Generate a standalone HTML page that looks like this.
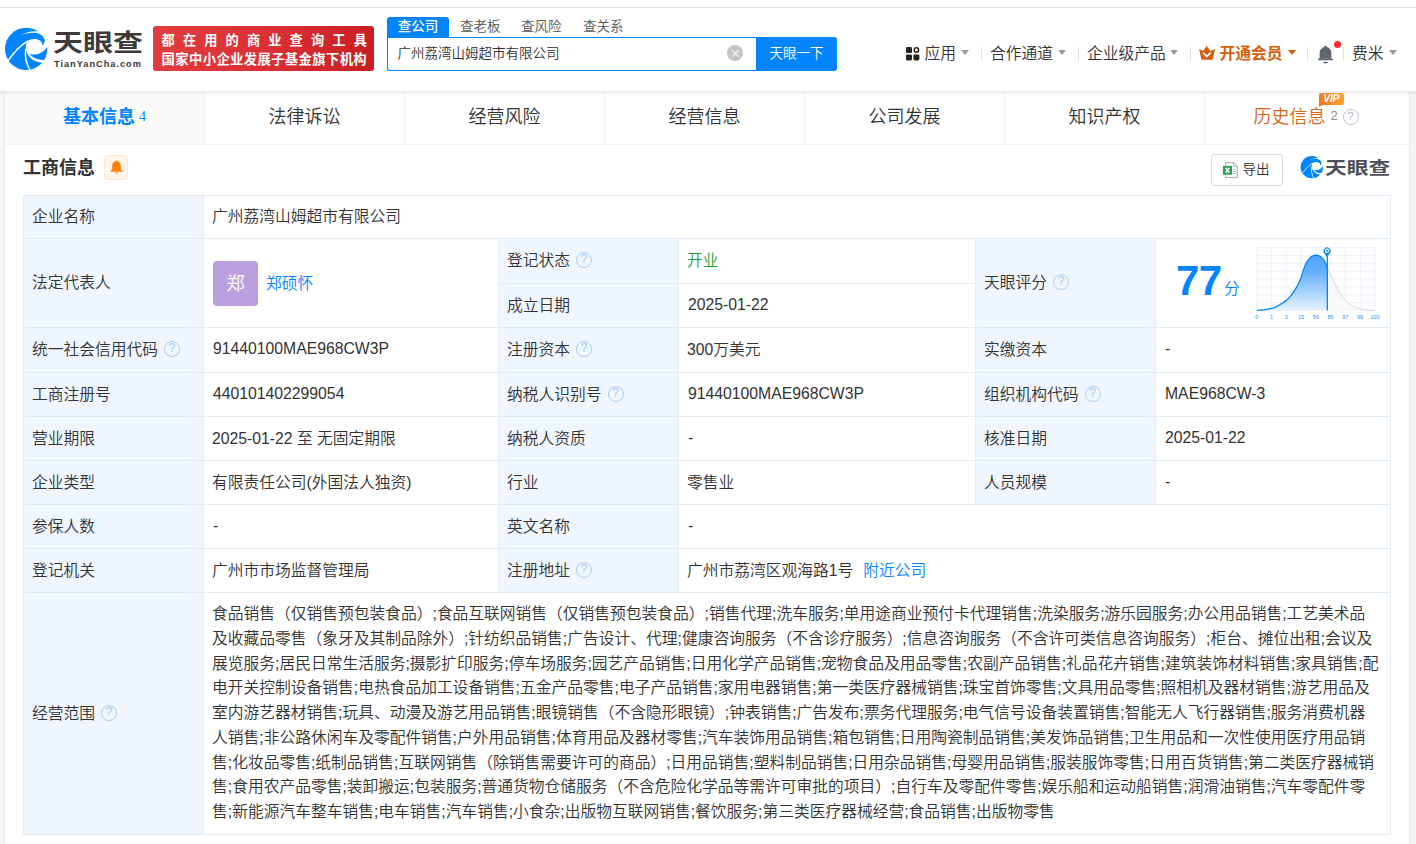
<!DOCTYPE html>
<html lang="zh-CN">
<head>
<meta charset="utf-8">
<title>广州荔湾山姆超市有限公司 - 天眼查</title>
<style>
*{box-sizing:border-box;margin:0;padding:0}
html,body{width:1416px;height:844px;overflow:hidden;background:#fff}
body{font-family:"Liberation Sans","Noto Sans CJK SC",sans-serif;color:#333;font-size:15.75px;font-weight:350;position:relative}
.abs{position:absolute}
.topline{left:0;top:7px;width:1416px;height:1px;background:#e4e4e4}
.header{left:0;top:8px;width:1416px;height:83px;background:#fff}
.pagebg{left:0;top:91px;width:1416px;height:753px;background:#f5f5f5;border-left:0}
.edge{top:91px;width:1px;height:753px;background:#ebebeb}
.hshadow{left:0;top:91px;width:1416px;height:5px;background:linear-gradient(rgba(0,0,0,0.065),rgba(0,0,0,0));z-index:5}
.main{left:5px;top:91px;width:1404px;height:753px;background:#fff}
/* logo */
.logo svg{display:block}
.brand{left:52.5px;top:24.5px;font-size:24px;font-weight:bold;color:#3e3a39;letter-spacing:0;line-height:36px;white-space:nowrap;transform:scaleX(1.25);transform-origin:0 0}
.brand2{left:54px;top:57.5px;font-size:9.2px;font-weight:bold;color:#3e3a39;letter-spacing:1.0px;line-height:12px;white-space:nowrap}
.banner{left:153px;top:26px;width:221px;height:45px;border-radius:3px;background:linear-gradient(100deg,#e33d3f 0%,#db3034 50%,#c81e22 100%);color:#fff;font-weight:bold;white-space:nowrap}
.banner .l1{position:absolute;left:8.6px;top:6px;font-size:13.2px;letter-spacing:8.15px;line-height:18px}
.banner .l2{position:absolute;left:8.6px;top:24.6px;font-size:13.3px;letter-spacing:0.4px;line-height:18px}
/* search */
.stab{top:17px;height:20px;line-height:20px;font-size:13.5px;color:#555;white-space:nowrap}
.stab.on{left:387px;width:62px;background:#0084ff;color:#fff;font-weight:500;text-align:center;border-radius:3px 3px 0 0}
.sinput{left:387px;top:37px;width:370px;height:34px;border:1px solid #0084ff;border-right:0;border-radius:0 0 0 3px;background:#fff;font-size:13.5px;line-height:32px;padding-left:9.5px;color:#333;white-space:nowrap}
.sclear{left:727px;top:45px;width:16px;height:16px;border-radius:50%;background:#c4c4c4}
.sclear:before,.sclear:after{content:"";position:absolute;left:7.5px;top:3.5px;width:1px;height:9px;background:#fff;transform:rotate(45deg)}
.sclear:after{transform:rotate(-45deg)}
.sbtn{left:756px;top:37px;width:81px;height:34px;background:#0084ff;color:#fff;font-size:13.5px;line-height:34px;text-align:center;border-radius:0 3px 3px 0}
/* nav */
.nav{top:43px;height:22px;line-height:22px;font-size:15.75px;color:#333;white-space:nowrap}
.caret{width:0;height:0;border-left:4.5px solid transparent;border-right:4.5px solid transparent;border-top:5.4px solid #999;top:50px;margin-left:-0.5px}
.sep{top:47px;width:1px;height:14px;background:#dfe3ea}
/* tabs */
.tabs{left:5px;top:91px;width:1404px;height:54px;border-bottom:1px solid #f3f3f3;background:#fff}
.tab{position:absolute;top:0;height:53px;width:200px;border-right:1px solid #f1f1f1;text-align:center;font-size:18px;line-height:52px;color:#333;white-space:nowrap}
.tab.on{background:#fafafa;color:#0084ff;font-weight:bold}
.tab .n{font-family:"Liberation Serif",serif;font-weight:normal;font-size:14px;margin-left:4px;position:relative;top:-2px}
/* section */
.stitle{left:23px;top:155px;font-size:18px;font-weight:bold;line-height:26px;color:#333;white-space:nowrap}
.bellbox{left:104px;top:155px;width:24px;height:25px;border:1px solid #ffe6d0;background:#fff4ea;border-radius:3px}
.export{left:1211px;top:154px;width:72px;height:32px;border:1px solid #dcdcdc;border-radius:3px;background:#fff;font-size:13.5px;line-height:30px;color:#333}
.export span{position:absolute;left:30.5px;top:0}
.mbrand{left:1325px;top:154.5px;font-size:17.4px;font-weight:bold;color:#4b4f55;line-height:26px;letter-spacing:0;white-space:nowrap;transform:scaleX(1.25);transform-origin:0 0}
/* table */
table{position:absolute;left:23px;top:195px;width:1367px;border-collapse:collapse;table-layout:fixed;font-size:15.75px;color:#333;font-weight:350}
td{border:1px solid #e2ecf7;height:44px;padding:0 0 0 8px;line-height:24px;vertical-align:middle;white-space:nowrap;background:#fff}
td.k{background:#eff6fd}
.q{display:inline-block;width:16px;height:16px;border:1.4px solid #a6cdf4;border-radius:50%;color:#a3cbf4;font-style:normal;font-size:12.5px;line-height:13.5px;text-align:center;vertical-align:middle;position:relative;top:-1.5px;margin-left:6px;font-weight:400;font-family:"Liberation Sans",sans-serif}
a{color:#0084ff;text-decoration:none}
.ava{display:inline-block;width:45px;height:45px;border-radius:4px;background:#bb9fde;color:#fff;font-size:18.5px;line-height:45px;text-align:center;vertical-align:middle;margin-right:9px;padding:0;font-weight:350}
td.en{padding-left:9px}td.en span{position:relative;top:-1px}
tr.h43 td{height:43px}tr.h45 td{height:45px}
.scope{padding:0 0 0 8px;line-height:24.75px;white-space:nowrap}
.scope .ln{display:block;height:24.75px}
.score{position:relative;height:87px}
.score .num{position:absolute;left:20px;top:17.5px;font-size:42px;font-weight:bold;color:#0084ff;line-height:48px;letter-spacing:-0.5px}
.score .fen{position:absolute;left:68px;top:38px;font-size:15.75px;color:#0084ff;line-height:22px}
.score .chart{position:absolute;left:94px;top:0}
</style>
</head>
<body>
<div class="abs topline"></div>
<div class="abs pagebg"></div>
<div class="abs header"></div>
<div class="abs edge" style="left:4px"></div><div class="abs edge" style="left:1409px"></div>
<div class="abs main"></div>

<!-- logo -->
<div class="abs logo" style="left:0;top:22px"><svg width="54" height="54" viewBox="0 0 844 844"><circle cx="409" cy="420" r="331" fill="#0084ff"/>
<path fill="#fff" d="M296 217C390 178 500 158 590 176C650 195 700 245 700 300L668 374C662 320 640 285 590 272C530 258 470 272 430 297C405 340 398 390 405 430C420 500 470 580 560 615C600 630 630 635 660 636L682 622L692 592C600 598 510 560 458 500C550 525 670 500 735 395L790 380L770 140L590 110L585 148C500 136 390 166 296 217Z"/>
<path fill="none" stroke="#fff" stroke-width="23" d="M436 296C330 360 220 470 124 610"/>
<path fill="none" stroke="#fff" stroke-width="24" d="M404 420C385 520 410 650 472 760"/></svg></div>
<div class="abs brand">天眼查</div>
<div class="abs brand2">TianYanCha.com</div>
<div class="abs banner"><span class="l1">都在用的商业查询工具</span><span class="l2">国家中小企业发展子基金旗下机构</span></div>

<!-- search -->
<div class="abs stab on">查公司</div>
<div class="abs stab" style="left:460px">查老板</div>
<div class="abs stab" style="left:521px">查风险</div>
<div class="abs stab" style="left:583px">查关系</div>
<div class="abs sinput">广州荔湾山姆超市有限公司</div>
<div class="abs sclear"></div>
<div class="abs sbtn">天眼一下</div>

<!-- nav -->
<svg class="abs" style="left:906px;top:47px" width="14" height="14" viewBox="0 0 14 14"><rect x="0" y="0" width="6" height="6" rx="1.3" fill="#222"/><rect x="0" y="7.4" width="6" height="6" rx="1.3" fill="#222"/><rect x="7.4" y="7.4" width="6" height="6" rx="1.3" fill="#222"/><circle cx="10.4" cy="3" r="2.2" fill="none" stroke="#222" stroke-width="1.5"/></svg>
<div class="abs nav" style="left:924.5px">应用</div>
<div class="abs caret" style="left:961.5px"></div>
<div class="abs sep" style="left:981px"></div>
<div class="abs nav" style="left:990px">合作通道</div>
<div class="abs caret" style="left:1058px"></div>
<div class="abs sep" style="left:1078px"></div>
<div class="abs nav" style="left:1087px">企业级产品</div>
<div class="abs caret" style="left:1170.5px"></div>
<div class="abs sep" style="left:1190px"></div>
<svg class="abs" style="left:1199px;top:46px" width="16" height="14" viewBox="0 0 16 14"><path d="M0.1 2.9L3.9 4.9L7.7 0.1L11.5 4.9L16 2.9L13.9 12.8Q13.7 13.7 12.8 13.7H3.3Q2.4 13.7 2.2 12.8Z" fill="#d45f0a"/><path d="M4.2 6.6L7.7 10.6L11.6 6.6" fill="none" stroke="#fff" stroke-width="1.7"/></svg>
<div class="abs nav" style="left:1219.5px;color:#d45f0a;font-weight:bold">开通会员</div>
<div class="abs caret" style="left:1288px;border-top-color:#d45f0a"></div>
<div class="abs sep" style="left:1307px"></div>
<svg class="abs" style="left:1317px;top:45px" width="17" height="19" viewBox="0 0 17 19"><path d="M8.5 0.8C9.3 0.8 9.7 1.3 9.7 2C12.7 2.6 14.4 5.2 14.4 8.2V13.8H2.6V8.2C2.6 5.2 4.3 2.6 7.3 2C7.3 1.3 7.7 0.8 8.5 0.8Z" fill="#5f6672"/><rect x="0.9" y="13.5" width="15.2" height="1.8" rx="0.9" fill="#5f6672"/><rect x="6.2" y="16.7" width="4.6" height="1.5" rx="0.7" fill="#5f6672"/></svg>
<div class="abs" style="left:1334px;top:41px;width:7px;height:7px;border-radius:50%;background:#ff2b2b"></div>
<div class="abs sep" style="left:1343px"></div>
<div class="abs nav" style="left:1352px">费米</div>
<div class="abs caret" style="left:1389px"></div>

<!-- tabs -->
<div class="abs tabs">
<div class="tab on" style="left:0">基本信息<span class="n">4</span></div>
<div class="tab" style="left:200px">法律诉讼</div>
<div class="tab" style="left:400px">经营风险</div>
<div class="tab" style="left:600px">经营信息</div>
<div class="tab" style="left:800px">公司发展</div>
<div class="tab" style="left:1000px">知识产权</div>
<div class="tab" style="left:1200px;width:204px;border-right:0;color:#d9641a;text-align:left;padding-left:48.5px">历史信息<span style="font-size:13px;color:#8a8a8a;margin-left:5px;position:relative;top:-3px;font-weight:400">2</span></div>
</div>
<div class="abs" style="left:1342.5px;top:109px;width:16px;height:16px;border:1.3px solid #c3c7ce;border-radius:50%;color:#b3b7be;font-size:11.5px;line-height:13.5px;text-align:center;font-family:'Liberation Sans',sans-serif">?</div>
<svg class="abs" style="left:1318px;top:92px;z-index:6" width="27" height="16" viewBox="0 0 27 16"><defs><linearGradient id="vg" x1="0" y1="0" x2="1" y2="0"><stop offset="0" stop-color="#f37a1a"/><stop offset="1" stop-color="#ffa232"/></linearGradient></defs><path d="M3 1H24Q26 1 26 3V11Q26 13 24 13H5L1 15V3Q1 1 3 1Z" fill="url(#vg)"/><text x="13.3" y="9.6" font-family="Liberation Sans, sans-serif" font-size="10.4" font-weight="bold" font-style="italic" fill="#fff" text-anchor="middle" letter-spacing="-0.3">VIP</text></svg>
<div class="abs hshadow"></div>

<!-- section title -->
<div class="abs stitle">工商信息</div>
<div class="abs bellbox"><svg style="position:absolute;left:4.5px;top:4px" width="13" height="14" viewBox="0 0 13 14"><path d="M6.5 0.4C7.2 0.4 7.6 0.8 7.6 1.3C9.8 1.9 10.8 3.7 10.8 5.8V9L12.6 11.3V11.8H0.4V11.3L2.2 9V5.8C2.2 3.7 3.2 1.9 5.4 1.3C5.4 0.8 5.8 0.4 6.5 0.4Z" fill="#ff8210"/><path d="M4.8 12.4H8.2C8 13.2 7.3 13.7 6.5 13.7C5.7 13.7 5 13.2 4.8 12.4Z" fill="#ff8210"/></svg></div>
<div class="abs export"><svg style="position:absolute;left:11px;top:7px" width="16" height="17" viewBox="0 0 16 17"><path d="M2.5 0.6H10.6L14.4 4.4V15.4H2.5Z" fill="#fff" stroke="#ababab" stroke-width="1"/><path d="M10.6 0.6V4.4H14.4" fill="none" stroke="#ababab" stroke-width="0.9"/><path d="M10 7.5H12.8M10 9.5H12.8M10 11.5H12.8" stroke="#b5b5b5" stroke-width="0.9"/><rect x="0" y="3.9" width="9" height="8.8" fill="#1ea24f"/><path d="M2.6 5.8L6.4 10.8M6.4 5.8L2.6 10.8" stroke="#fff" stroke-width="1.5"/></svg><span>导出</span></div>
<div class="abs logo" style="left:1298.2px;top:153px"><svg width="28.5" height="28.5" viewBox="0 0 844 844"><circle cx="409" cy="420" r="331" fill="#0084ff"/>
<path fill="#fff" d="M296 217C390 178 500 158 590 176C650 195 700 245 700 300L668 374C662 320 640 285 590 272C530 258 470 272 430 297C405 340 398 390 405 430C420 500 470 580 560 615C600 630 630 635 660 636L682 622L692 592C600 598 510 560 458 500C550 525 670 500 735 395L790 380L770 140L590 110L585 148C500 136 390 166 296 217Z"/>
<path fill="none" stroke="#fff" stroke-width="23" d="M436 296C330 360 220 470 124 610"/>
<path fill="none" stroke="#fff" stroke-width="24" d="M404 420C385 520 410 650 472 760"/></svg></div>
<div class="abs mbrand">天眼查</div>

<!-- table -->
<table>
<colgroup><col style="width:180px"><col style="width:295px"><col style="width:180px"><col style="width:297px"><col style="width:180px"><col style="width:235px"></colgroup>
<tr class="h43"><td class="k">企业名称</td><td colspan="5">广州荔湾山姆超市有限公司</td></tr>
<tr class="h45"><td class="k" rowspan="2">法定代表人</td><td rowspan="2" style="padding-left:9px"><span class="ava">郑</span><a style="position:relative;top:2px;left:-1px">郑硕怀</a></td><td class="k">登记状态<i class="q">?</i></td><td style="color:#1f9e40">开业</td><td class="k" rowspan="2">天眼评分<i class="q">?</i></td><td rowspan="2" style="padding:0"><div class="score"><span class="num">77</span><span class="fen">分</span><svg class="chart" width="140" height="86" viewBox="0 0 140 86">
<defs><linearGradient id="bg1" x1="0" y1="0" x2="0" y2="1"><stop offset="0" stop-color="#4da3ff"/><stop offset="0.3" stop-color="#66b0ff"/><stop offset="1" stop-color="#e6f2ff"/></linearGradient></defs>
<g stroke="#ebf1fb" stroke-width="0.9"><line x1="6.85" y1="7.55" x2="6.85" y2="70.50"/><line x1="21.61" y1="7.55" x2="21.61" y2="70.50"/><line x1="36.36" y1="7.55" x2="36.36" y2="70.50"/><line x1="51.12" y1="7.55" x2="51.12" y2="70.50"/><line x1="65.88" y1="7.55" x2="65.88" y2="70.50"/><line x1="80.63" y1="7.55" x2="80.63" y2="70.50"/><line x1="95.39" y1="7.55" x2="95.39" y2="70.50"/><line x1="110.14" y1="7.55" x2="110.14" y2="70.50"/><line x1="124.90" y1="7.55" x2="124.90" y2="70.50"/><line x1="6.85" y1="7.55" x2="124.90" y2="7.55"/><line x1="6.85" y1="15.42" x2="124.90" y2="15.42"/><line x1="6.85" y1="23.29" x2="124.90" y2="23.29"/><line x1="6.85" y1="31.16" x2="124.90" y2="31.16"/><line x1="6.85" y1="39.02" x2="124.90" y2="39.02"/><line x1="6.85" y1="46.89" x2="124.90" y2="46.89"/><line x1="6.85" y1="54.76" x2="124.90" y2="54.76"/><line x1="6.85" y1="62.63" x2="124.90" y2="62.63"/><line x1="6.85" y1="70.50" x2="124.90" y2="70.50"/></g>
<polygon points="77.3,27.7 77.7,28.4 78.1,29.4 78.6,30.6 79.2,31.9 79.9,33.3 80.6,34.7 81.3,36.3 82.1,38.1 83.0,39.9 83.9,41.8 84.7,43.6 85.6,45.3 86.4,47.0 87.3,48.6 88.1,50.1 89.0,51.6 89.8,53.1 90.6,54.4 91.4,55.6 92.2,56.6 92.9,57.6 93.7,58.6 94.5,59.5 95.5,60.4 96.5,61.4 97.7,62.4 98.9,63.4 100.2,64.3 101.5,65.2 102.7,66.0 104.0,66.6 105.2,67.2 106.5,67.8 107.8,68.2 109.0,68.6 110.3,69.0 111.5,69.3 112.8,69.5 114.1,69.7 115.4,69.9 116.6,70.0 117.8,70.1 119.1,70.2 120.5,70.3 121.8,70.4 123.1,70.4 124.1,70.5 124.9,70.5 124.9,70.5 77.3,70.5" fill="#f9f9fa"/>
<polyline points="77.3,27.7 77.7,28.4 78.1,29.4 78.6,30.6 79.2,31.9 79.9,33.3 80.6,34.7 81.3,36.3 82.1,38.1 83.0,39.9 83.9,41.8 84.7,43.6 85.6,45.3 86.4,47.0 87.3,48.6 88.1,50.1 89.0,51.6 89.8,53.1 90.6,54.4 91.4,55.6 92.2,56.6 92.9,57.6 93.7,58.6 94.5,59.5 95.5,60.4 96.5,61.4 97.7,62.4 98.9,63.4 100.2,64.3 101.5,65.2 102.7,66.0 104.0,66.6 105.2,67.2 106.5,67.8 107.8,68.2 109.0,68.6 110.3,69.0 111.5,69.3 112.8,69.5 114.1,69.7 115.4,69.9 116.6,70.0 117.8,70.1 119.1,70.2 120.5,70.3 121.8,70.4 123.1,70.4 124.1,70.5 124.9,70.5" fill="none" stroke="#cfd3da" stroke-width="0.9"/>
<polygon points="6.8,70.4 7.6,70.3 8.7,70.2 10.0,70.1 11.4,70.0 12.8,69.8 14.1,69.7 15.3,69.5 16.6,69.4 17.9,69.2 19.2,69.0 20.4,68.7 21.5,68.5 22.4,68.2 23.3,67.9 24.0,67.6 24.8,67.3 25.5,67.0 26.2,66.7 26.9,66.3 27.5,66.0 28.1,65.7 28.7,65.3 29.4,64.9 30.2,64.5 31.1,63.9 32.2,63.2 33.2,62.6 34.3,61.8 35.3,61.1 36.3,60.4 37.1,59.8 37.8,59.1 38.5,58.4 39.1,57.7 39.7,57.1 40.3,56.4 40.8,55.8 41.3,55.2 41.8,54.5 42.3,53.9 42.8,53.2 43.3,52.4 43.9,51.4 44.6,50.5 45.3,49.4 46.0,48.2 46.7,47.1 47.3,45.8 48.0,44.5 48.6,43.2 49.3,41.8 49.9,40.3 50.6,38.8 51.2,37.3 51.7,35.6 52.3,33.9 52.8,32.1 53.3,30.3 53.9,28.7 54.4,27.2 54.9,25.9 55.4,24.8 55.8,23.8 56.3,22.9 56.8,22.0 57.4,21.2 58.0,20.3 58.7,19.4 59.3,18.6 60.0,17.8 60.7,17.2 61.4,16.6 62.2,16.2 62.9,15.8 63.7,15.5 64.4,15.3 65.2,15.1 66.0,15.1 66.7,15.1 67.5,15.3 68.3,15.5 69.0,15.8 69.8,16.2 70.5,16.6 71.2,17.2 71.9,17.8 72.6,18.6 73.3,19.4 73.9,20.2 74.5,21.2 75.1,22.2 75.7,23.4 76.2,24.7 76.7,25.9 77.1,27.0 77.3,27.7 77.3,70.5 6.8,70.5" fill="url(#bg1)"/>
<polyline points="6.8,70.4 7.6,70.3 8.7,70.2 10.0,70.1 11.4,70.0 12.8,69.8 14.1,69.7 15.3,69.5 16.6,69.4 17.9,69.2 19.2,69.0 20.4,68.7 21.5,68.5 22.4,68.2 23.3,67.9 24.0,67.6 24.8,67.3 25.5,67.0 26.2,66.7 26.9,66.3 27.5,66.0 28.1,65.7 28.7,65.3 29.4,64.9 30.2,64.5 31.1,63.9 32.2,63.2 33.2,62.6 34.3,61.8 35.3,61.1 36.3,60.4 37.1,59.8 37.8,59.1 38.5,58.4 39.1,57.7 39.7,57.1 40.3,56.4 40.8,55.8 41.3,55.2 41.8,54.5 42.3,53.9 42.8,53.2 43.3,52.4 43.9,51.4 44.6,50.5 45.3,49.4 46.0,48.2 46.7,47.1 47.3,45.8 48.0,44.5 48.6,43.2 49.3,41.8 49.9,40.3 50.6,38.8 51.2,37.3 51.7,35.6 52.3,33.9 52.8,32.1 53.3,30.3 53.9,28.7 54.4,27.2 54.9,25.9 55.4,24.8 55.8,23.8 56.3,22.9 56.8,22.0 57.4,21.2 58.0,20.3 58.7,19.4 59.3,18.6 60.0,17.8 60.7,17.2 61.4,16.6 62.2,16.2 62.9,15.8 63.7,15.5 64.4,15.3 65.2,15.1 66.0,15.1 66.7,15.1 67.5,15.3 68.3,15.5 69.0,15.8 69.8,16.2 70.5,16.6 71.2,17.2 71.9,17.8 72.6,18.6 73.3,19.4 73.9,20.2 74.5,21.2 75.1,22.2 75.7,23.4 76.2,24.7 76.7,25.9 77.1,27.0 77.3,27.7" fill="none" stroke="#0084ff" stroke-width="1.3"/>
<line x1="77.35" y1="16.0" x2="77.35" y2="70.5" stroke="#0084ff" stroke-width="1.3"/>
<path d="M77.05 17.2L74.35 13.2A3.5 3.5 0 1 1 79.75 13.2Z" fill="#0084ff"/>
<circle cx="77.05" cy="10.8" r="2.2" fill="#fff"/>
<circle cx="77.05" cy="10.8" r="1" fill="#0084ff"/>
<g font-family="Liberation Sans, sans-serif" font-size="5.6" fill="#2a91ff" text-anchor="middle"><text x="6.8" y="78.6">0</text><text x="21.6" y="78.6">1</text><text x="36.4" y="78.6">3</text><text x="51.1" y="78.6">15</text><text x="65.9" y="78.6">50</text><text x="80.6" y="78.6">85</text><text x="95.4" y="78.6">97</text><text x="110.1" y="78.6">99</text><text x="124.9" y="78.6">100</text></g>
</svg></div></td></tr>
<tr><td class="k">成立日期</td><td class="en"><span>2025-01-22</span></td></tr>
<tr class="h45"><td class="k">统一社会信用代码<i class="q">?</i></td><td class="en"><span>91440100MAE968CW3P</span></td><td class="k">注册资本<i class="q">?</i></td><td>300万美元</td><td class="k">实缴资本</td><td class="en"><span>-</span></td></tr>
<tr><td class="k">工商注册号</td><td class="en"><span>440101402299054</span></td><td class="k">纳税人识别号<i class="q">?</i></td><td class="en"><span>91440100MAE968CW3P</span></td><td class="k">组织机构代码<i class="q">?</i></td><td class="en"><span>MAE968CW-3</span></td></tr>
<tr><td class="k">营业期限</td><td>2025-01-22 至 无固定期限</td><td class="k">纳税人资质</td><td class="en"><span>-</span></td><td class="k">核准日期</td><td class="en"><span>2025-01-22</span></td></tr>
<tr><td class="k">企业类型</td><td>有限责任公司(外国法人独资)</td><td class="k">行业</td><td>零售业</td><td class="k">人员规模</td><td class="en"><span>-</span></td></tr>
<tr><td class="k">参保人数</td><td class="en"><span>-</span></td><td class="k">英文名称</td><td colspan="3" class="en"><span>-</span></td></tr>
<tr><td class="k">登记机关</td><td>广州市市场监督管理局</td><td class="k">注册地址<i class="q">?</i></td><td colspan="3">广州市荔湾区观海路1号<a style="margin-left:10px">附近公司</a></td></tr>
<tr><td class="k" style="height:242px">经营范围<i class="q">?</i></td><td colspan="5" class="scope"><span class="ln">食品销售（仅销售预包装食品）;食品互联网销售（仅销售预包装食品）;销售代理;洗车服务;单用途商业预付卡代理销售;洗染服务;游乐园服务;办公用品销售;工艺美术品</span><span class="ln">及收藏品零售（象牙及其制品除外）;针纺织品销售;广告设计、代理;健康咨询服务（不含诊疗服务）;信息咨询服务（不含许可类信息咨询服务）;柜台、摊位出租;会议及</span><span class="ln">展览服务;居民日常生活服务;摄影扩印服务;停车场服务;园艺产品销售;日用化学产品销售;宠物食品及用品零售;农副产品销售;礼品花卉销售;建筑装饰材料销售;家具销售;配</span><span class="ln">电开关控制设备销售;电热食品加工设备销售;五金产品零售;电子产品销售;家用电器销售;第一类医疗器械销售;珠宝首饰零售;文具用品零售;照相机及器材销售;游艺用品及</span><span class="ln">室内游艺器材销售;玩具、动漫及游艺用品销售;眼镜销售（不含隐形眼镜）;钟表销售;广告发布;票务代理服务;电气信号设备装置销售;智能无人飞行器销售;服务消费机器</span><span class="ln">人销售;非公路休闲车及零配件销售;户外用品销售;体育用品及器材零售;汽车装饰用品销售;箱包销售;日用陶瓷制品销售;美发饰品销售;卫生用品和一次性使用医疗用品销</span><span class="ln">售;化妆品零售;纸制品销售;互联网销售（除销售需要许可的商品）;日用品销售;塑料制品销售;日用杂品销售;母婴用品销售;服装服饰零售;日用百货销售;第二类医疗器械销</span><span class="ln">售;食用农产品零售;装卸搬运;包装服务;普通货物仓储服务（不含危险化学品等需许可审批的项目）;自行车及零配件零售;娱乐船和运动船销售;润滑油销售;汽车零配件零</span><span class="ln">售;新能源汽车整车销售;电车销售;汽车销售;小食杂;出版物互联网销售;餐饮服务;第三类医疗器械经营;食品销售;出版物零售</span></td></tr>
</table>
</body>
</html>
